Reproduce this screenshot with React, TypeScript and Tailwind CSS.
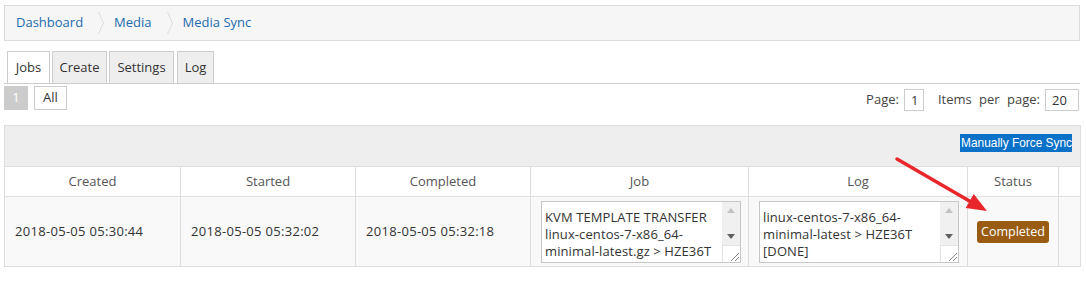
import React from 'react';

function Chevron() {
  return (
    <svg width="6" height="22" viewBox="0 0 6 22" className="ml-[15px] mr-[10px]">
      <polyline points="0.5,0 5.5,11 0.5,22" fill="none" stroke="#dcdcdc" strokeWidth="1" />
    </svg>
  );
}

function FakeTextarea({ lines }: { lines: string[] }) {
  return (
    <div className="flex w-[200px] h-[62px] border border-[#c6c6c6] bg-white">
      <div className="flex-1 overflow-hidden pl-[3px] pt-[7px] leading-[17px] text-[#333] whitespace-nowrap text-left tracking-[0.1px]">
        {lines.map((l) => (
          <div key={l}>{l}</div>
        ))}
      </div>
      <div className="w-[18px] flex flex-col">
        <div className="h-[43px] bg-[#f0f0f0] flex flex-col justify-between">
          <div className="h-[17px] flex items-center justify-center">
            <svg width="8" height="5" viewBox="0 0 8 5">
              <polygon points="0,5 4,0 8,5" fill="#c2c2c2" />
            </svg>
          </div>
          <div className="h-[17px] flex items-center justify-center">
            <svg width="8" height="5" viewBox="0 0 8 5">
              <polygon points="0,0 8,0 4,5" fill="#606060" />
            </svg>
          </div>
        </div>
        <div className="flex-1 border-l border-t border-[#e2e2e2] bg-white relative">
          <svg width="17" height="17" viewBox="0 0 17 17" className="absolute right-0 bottom-0">
            <line x1="8" y1="16" x2="16" y2="8" stroke="#8a8a8a" strokeWidth="1" />
            <line x1="12" y1="16" x2="16" y2="12" stroke="#8a8a8a" strokeWidth="1" />
          </svg>
        </div>
      </div>
    </div>
  );
}

const tabs = [
  { label: 'Jobs', cls: 'w-[43px] bg-white' },
  { label: 'Create', cls: 'w-[55px] bg-[#eeeeee]' },
  { label: 'Settings', cls: 'w-[65px] bg-[#eeeeee]' },
  { label: 'Log', cls: 'w-[37px] ml-[1px] bg-[#eeeeee]' },
];

export default function App() {
  return (
    <div className="relative w-[1086px] h-[286px] bg-white font-['Open_Sans',sans-serif] text-[13px] text-[#333]">
      <div className="ml-[4px] w-[1076px] pt-[5px]">
        {/* Breadcrumb */}
        <div className="h-[36px] border border-[#dcdcdc] bg-[#f6f6f6] flex items-center pl-[11px] text-[#1c6cb0]">
          <span>Dashboard</span>
          <Chevron />
          <span>Media</span>
          <Chevron />
          <span>Media Sync</span>
        </div>

        {/* Tabs */}
        <div className="mt-[10px] flex gap-[2px] pl-[3px] border-b border-[#cccccc]">
          {tabs.map((t) => (
            <div
              key={t.label}
              className={`h-[32px] text-center leading-[31px] border border-b-0 border-[#cccccc] ${t.cls}`}
            >
              {t.label}
            </div>
          ))}
        </div>

        {/* Pager */}
        <div className="mt-[2px] flex justify-between items-start">
          <div className="flex gap-[6px]">
            <div className="w-[24px] h-[24px] bg-[#cccccc] text-white flex items-center justify-center">1</div>
            <div className="w-[33px] h-[24px] border border-[#cccccc] bg-white flex items-center justify-center">All</div>
          </div>
          <div className="mt-[3px] pr-[1px] flex items-center text-[#444] [word-spacing:4px]">
            <span>Page:</span>
            <div className="ml-[5px] w-[20px] h-[22px] border border-[#cccccc] pl-[6px] leading-[20px] text-[#333]">1</div>
            <span className="ml-[14px]">Items per page:</span>
            <div className="ml-[5px] w-[34px] h-[22px] border border-[#cccccc] pl-[6px] leading-[20px] text-[#333]">20</div>
          </div>
        </div>

        {/* Table */}
        <table className="mt-[14px] w-[1076px] table-fixed border-collapse">
          <colgroup>
            <col className="w-[176px]" />
            <col className="w-[175px]" />
            <col className="w-[175px]" />
            <col className="w-[218px]" />
            <col className="w-[219px]" />
            <col className="w-[91px]" />
            <col className="w-[22px]" />
          </colgroup>
          <thead>
            <tr>
              <td colSpan={7} className="h-[41px] p-0 bg-[#eeeeee] border border-[#dddddd] text-right align-top">
                <div className="flex justify-end pt-[8px] pr-[8px]">
                  <button className="w-[112px] h-[18px] bg-[#0a71c9] text-white font-['Liberation_Sans',Arial,sans-serif] text-[11.9px] leading-[18px] text-left pl-[1px] overflow-hidden whitespace-nowrap">
                    Manually Force Sync
                  </button>
                </div>
              </td>
            </tr>
            <tr className="bg-white">
              {['Created', 'Started', 'Completed', 'Job', 'Log', 'Status', ''].map((h, i) => (
                <th key={i} className="h-[30px] p-0 border border-[#dddddd] font-normal text-[#555] text-center">
                  {h}
                </th>
              ))}
            </tr>
          </thead>
          <tbody>
            <tr className="bg-[#f9f9f9]">
              <td className="h-[70px] px-[10px] border border-[#dddddd] tracking-[0.3px]">2018-05-05 05:30:44</td>
              <td className="px-[10px] border border-[#dddddd] tracking-[0.3px]">2018-05-05 05:32:02</td>
              <td className="px-[10px] border border-[#dddddd] tracking-[0.3px]">2018-05-05 05:32:18</td>
              <td className="px-[10px] border border-[#dddddd]">
                <FakeTextarea lines={['KVM TEMPLATE TRANSFER', 'linux-centos-7-x86_64-', 'minimal-latest.gz > HZE36T']} />
              </td>
              <td className="px-[10px] border border-[#dddddd]">
                <FakeTextarea lines={['linux-centos-7-x86_64-', 'minimal-latest > HZE36T', '[DONE]']} />
              </td>
              <td className="border border-[#dddddd] text-center">
                <span className="inline-block h-[22px] px-[4px] leading-[22px] rounded-[3px] bg-[#995c12] text-white text-[12.5px]">
                  Completed
                </span>
              </td>
              <td className="border border-[#dddddd]"></td>
            </tr>
          </tbody>
        </table>
      </div>

      {/* Annotation arrow */}
      <svg className="absolute left-0 top-0 pointer-events-none" width="1086" height="286">
        <line x1="897" y1="159" x2="972" y2="202.5" stroke="#e8262b" strokeWidth="3.5" strokeLinecap="round" />
        <polygon points="987,211 965.7,207.9 973.7,194.1" fill="#e8262b" />
      </svg>
    </div>
  );
}
